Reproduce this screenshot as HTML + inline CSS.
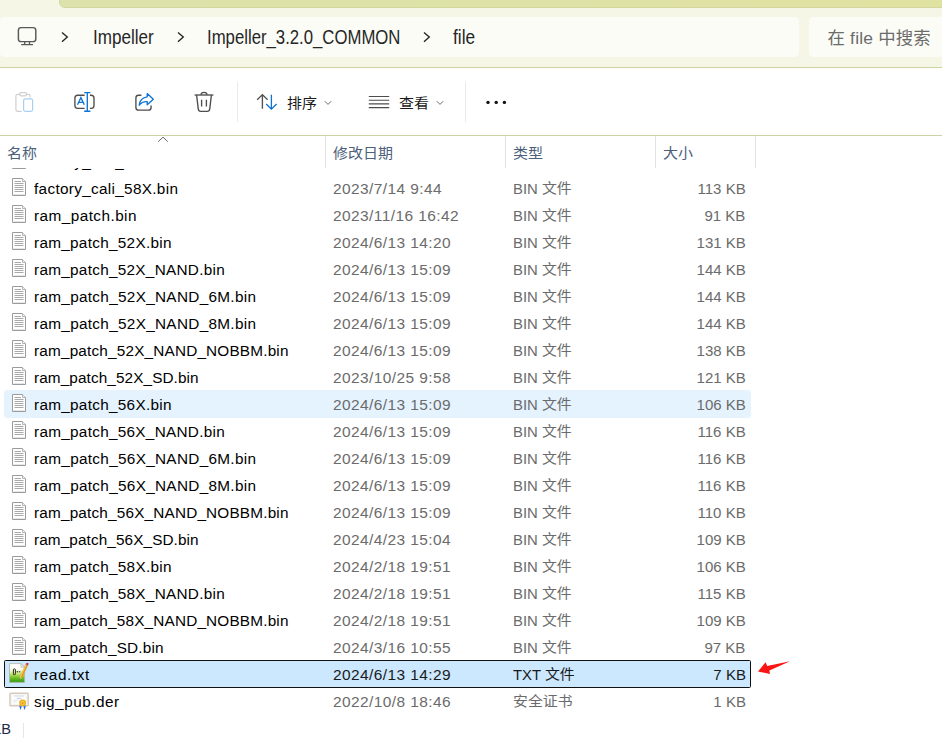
<!DOCTYPE html>
<html lang="zh-CN"><head><meta charset="utf-8"><title>file</title>
<style>
*{box-sizing:border-box}
html,body{margin:0;padding:0}
body{width:942px;height:738px;overflow:hidden;position:relative;background:#fff;
 font-family:"Liberation Sans","Noto Sans CJK SC",sans-serif;color:#000}
.abs{position:absolute}
#hdrbg{left:0;top:0;width:942px;height:67px;background:#f5f6e6}
#tab{left:59px;top:-8px;width:900px;height:16px;background:linear-gradient(90deg,#dce2ab,#e0e2a1);border-radius:6px;border:1px solid #d2d89d}
#addr{left:0px;top:17px;width:799px;height:40px;border-radius:4.5px;background:#fcfcf7}
#search{left:809px;top:17px;width:150px;height:40px;border-radius:4.5px;background:#fcfcf7}
#line1{left:0;top:67px;width:942px;height:1px;background:#ccd3a2}
#line2{left:0;top:135px;width:942px;height:1px;background:#cbd2a3}
.crumb{position:absolute;top:26px;height:22px;line-height:22px;font-size:17.2px;color:#1b1b1b;white-space:nowrap}
.cb{font-size:19.4px;transform-origin:0 50%;top:24.5px;color:#262626;height:24px;line-height:24px}
.sep{position:absolute;width:1px;background:#eaeaea}
.tbtxt{position:absolute;top:93px;height:20px;line-height:20px;font-size:15px;color:#1a1a1a;white-space:nowrap}
.hd{position:absolute;top:143px;height:20px;line-height:20px;font-size:15px;color:#4c607a;white-space:nowrap}
#list{left:0;top:168px;width:942px;height:552px;overflow:hidden}
.row{position:absolute;left:0;width:942px;height:27px}
.row span{position:absolute;top:3.5px;height:21px;line-height:21px;font-size:15.2px;white-space:nowrap}
.row .n{left:33.9px;color:#000;transform:scaleX(1.0086);transform-origin:0 50%;letter-spacing:0px}
.row .d{left:333.4px;color:#6b6b6b;transform:scaleX(1.0182);transform-origin:0 50%;letter-spacing:0.416px}
.row .t{left:512.7px;color:#6b6b6b;transform:scaleX(0.9797);transform-origin:0 50%}
.row .s{right:196.3px;color:#6b6b6b;text-align:right;transform:scaleX(0.9893);transform-origin:100% 50%}
.selrow .d,.selrow .t,.selrow .s{color:#1a1a1a !important}
.row span i{font-style:normal;display:inline-block;transform:scaleY(0.89);transform-origin:50% 52%}
.hd,.tbtxt{transform:scaleY(0.91);transform-origin:50% 52%}
.fi{position:absolute;display:block}
.hov{position:absolute;left:4px;width:747px;height:27.5px;border-radius:3px;background:#e5f3ff}
.sel{position:absolute;left:4px;width:747px;height:27.5px;border-radius:1.5px;background:#cce8ff;border:1px solid #111}
</style></head>
<body>
<div id="hdrbg" class="abs"></div><div id="tab" class="abs"></div><div id="addr" class="abs"></div><div id="search" class="abs"></div><div id="line1" class="abs"></div><div id="line2" class="abs"></div>
<svg class="abs" style="left:16px;top:25px" width="22" height="22" viewBox="0 0 22 22"><rect x="2.4" y="2.6" width="17.4" height="14" rx="2.7" fill="none" stroke="#585858" stroke-width="1.45"/><path d="M8.7 16.8V19.4M13.5 16.8V19.4M5.2 19.6H17" stroke="#585858" stroke-width="1.3" fill="none"/></svg>
<svg class="abs" style="left:60px;top:30.4px" width="10" height="14" viewBox="0 0 10 14"><path d="M2 2.4L7.3 7.1L2 11.8" fill="none" stroke="#242424" stroke-width="1.35"/></svg><svg class="abs" style="left:176px;top:30.4px" width="10" height="14" viewBox="0 0 10 14"><path d="M2 2.4L7.3 7.1L2 11.8" fill="none" stroke="#242424" stroke-width="1.35"/></svg><svg class="abs" style="left:422px;top:30.4px" width="10" height="14" viewBox="0 0 10 14"><path d="M2 2.4L7.3 7.1L2 11.8" fill="none" stroke="#242424" stroke-width="1.35"/></svg>
<div class="crumb cb" id="c1" style="left:93.2px;transform:scaleX(0.881)">Impeller</div><div class="crumb cb" id="c2" style="left:207.4px;transform:scaleX(0.863)">Impeller_3.2.0_COMMON</div><div class="crumb cb" id="c3" style="left:452.9px;transform:scaleX(0.89)">file</div>
<div class="crumb" id="c4" style="left:827.5px;top:27px;color:#6b6b6b;font-size:17.4px;letter-spacing:0.2px">在 file 中搜索</div>
<svg class="abs" style="left:13px;top:90px" width="22" height="24" viewBox="0 0 22 24"><path d="M7.2 4.4H4.6Q2.9 4.4 2.9 6.1V19.6Q2.9 21.3 4.6 21.3H8.6M13.4 4.4H15.6Q17.1 4.4 17.1 6V7.4" fill="none" stroke="#cfcfcf" stroke-width="1.2"/><rect x="6.6" y="2.6" width="7" height="3.2" rx="1.6" fill="none" stroke="#cfcfcf" stroke-width="1.2"/><rect x="10.6" y="8.8" width="9" height="12.6" rx="1.8" fill="#fff" stroke="#a8d0f2" stroke-width="1.2"/></svg>
<svg class="abs" style="left:72px;top:90px" width="24" height="24" viewBox="0 0 24 24"><path d="M12.6 5.2H5.8Q2.9 5.2 2.9 8.1V15.5Q2.9 18.4 5.8 18.4H12.6M17.9 5.2H19.1Q22 5.2 22 8.1V15.5Q22 18.4 19.1 18.4H17.9" fill="none" stroke="#4d4d4d" stroke-width="1.35"/><path d="M15.3 2.6V21.2M12.2 2.6H18.4M12.2 21.2H18.4" fill="none" stroke="#0c73d6" stroke-width="1.35"/><path d="M5.5 14.8L8.9 7.6L12.3 14.8M6.7 12.4H11.1" fill="none" stroke="#0c73d6" stroke-width="1.3"/></svg>
<svg class="abs" style="left:133px;top:90px" width="24" height="24" viewBox="0 0 24 24"><path d="M8.4 5.2H5.6Q2.9 5.2 2.9 7.9V17.4Q2.9 20.1 5.6 20.1H15.4Q18.1 20.1 18.1 17.4V15.6" fill="none" stroke="#4d4d4d" stroke-width="1.35"/><path d="M14.2 3.6L20.3 9.2L14.2 14.8V11.6Q9.2 11.2 6.2 15.2Q7.2 7.6 14.2 6.8Z" fill="none" stroke="#0c73d6" stroke-width="1.3" stroke-linejoin="round"/></svg>
<svg class="abs" style="left:193px;top:90px" width="22" height="24" viewBox="0 0 22 24"><path d="M1.6 5H20.4" stroke="#4d4d4d" stroke-width="1.35" fill="none"/><path d="M8 4.8Q8 2.4 11 2.4Q14 2.4 14 4.8" fill="none" stroke="#4d4d4d" stroke-width="1.3"/><path d="M3.6 5.2L5.3 19.2Q5.6 21.3 7.6 21.3H14.4Q16.4 21.3 16.7 19.2L18.4 5.2" fill="none" stroke="#4d4d4d" stroke-width="1.35"/><path d="M8.6 9.8V16.4M13.4 9.8V16.4" stroke="#4d4d4d" stroke-width="1.35" fill="none"/></svg>
<div class="sep" style="left:237px;top:82px;height:40px"></div><div class="sep" style="left:465px;top:82px;height:40px"></div>
<svg class="abs" style="left:255px;top:92px" width="24" height="20" viewBox="0 0 24 20"><path d="M7.4 2.6V16.8M2.2 7.8L7.4 2.6L12.6 7.8" fill="none" stroke="#505050" stroke-width="1.35"/><path d="M16.4 2.8V17.2M11.2 12L16.4 17.2L21.6 12" fill="none" stroke="#0c73d6" stroke-width="1.3"/></svg>
<div class="tbtxt" style="left:287px">排序</div>
<svg class="abs" style="left:324px;top:99.5px" width="8" height="6" viewBox="0 0 8 6"><path d="M0.8 1.2L4 4.4L7.2 1.2" fill="none" stroke="#6a6a6a" stroke-width="1"/></svg>
<svg class="abs" style="left:368px;top:95px" width="22" height="14" viewBox="0 0 22 14"><path d="M0.8 1.5H21.2M0.8 5.2H21.2M0.8 8.9H21.2M0.8 12.6H21.2" stroke="#4d4d4d" stroke-width="1.1" fill="none"/></svg>
<div class="tbtxt" style="left:399px">查看</div>
<svg class="abs" style="left:436px;top:99.5px" width="8" height="6" viewBox="0 0 8 6"><path d="M0.8 1.2L4 4.4L7.2 1.2" fill="none" stroke="#6a6a6a" stroke-width="1"/></svg>
<svg class="abs" style="left:484px;top:98px" width="24" height="8" viewBox="0 0 24 8"><circle cx="4" cy="4.4" r="1.7" fill="#111"/><circle cx="12.2" cy="4.4" r="1.7" fill="#111"/><circle cx="20.4" cy="4.4" r="1.7" fill="#111"/></svg>
<div class="hd" style="left:7px">名称</div><div class="hd" style="left:333px">修改日期</div><div class="hd" style="left:513px">类型</div><div class="hd" style="left:663px">大小</div>
<div class="sep" style="left:325px;top:136px;height:32px;background:#e2e2e2"></div><div class="sep" style="left:505px;top:136px;height:32px;background:#e2e2e2"></div><div class="sep" style="left:655px;top:136px;height:32px;background:#e2e2e2"></div><div class="sep" style="left:755px;top:136px;height:32px;background:#e2e2e2"></div>
<svg class="abs" style="left:157px;top:136px" width="12" height="7" viewBox="0 0 12 7"><path d="M1.2 5.6L6 1.2L10.8 5.6" fill="none" stroke="#6a6a6a" stroke-width="1"/></svg>
<div id="list" class="abs">
<div class="hov" style="top:222px"></div><div class="sel" style="top:492px"></div>
<div class="row" style="top:-21px"><svg class="fi" style="left:12px;top:4px" width="14" height="18" viewBox="0 0 14 18"><path d="M0.5 0.5H10.5L13.5 3.5V17.5H0.5Z" fill="#fff" stroke="#9b9b9b"/><path d="M10.5 0.5V3.5H13.5" fill="#f2f2f2" stroke="#b5b5b5"/><path d="M2.5 3.5H9M2.5 5.5H11.5M2.5 7.5H11.5M2.5 9.5H11.5M2.5 11.5H11.5M2.5 13.5H11.5" stroke="#a9a9a9" fill="none"/><path d="M1.5 16.5H12.5" stroke="#e6e6e6"/></svg><span class="n" style="letter-spacing:0.313px">factory_cali_56X.bin</span><span class="d">2023/7/14 9:44</span><span class="t" style="clip-path:inset(0 0 7px 0)">BIN <i>文件</i></span><span class="s">113 KB</span></div>
<div class="row" style="top:6px"><svg class="fi" style="left:12px;top:4px" width="14" height="18" viewBox="0 0 14 18"><path d="M0.5 0.5H10.5L13.5 3.5V17.5H0.5Z" fill="#fff" stroke="#9b9b9b"/><path d="M10.5 0.5V3.5H13.5" fill="#f2f2f2" stroke="#b5b5b5"/><path d="M2.5 3.5H9M2.5 5.5H11.5M2.5 7.5H11.5M2.5 9.5H11.5M2.5 11.5H11.5M2.5 13.5H11.5" stroke="#a9a9a9" fill="none"/><path d="M1.5 16.5H12.5" stroke="#e6e6e6"/></svg><span class="n" style="letter-spacing:0.313px">factory_cali_58X.bin</span><span class="d">2023/7/14 9:44</span><span class="t">BIN <i>文件</i></span><span class="s">113 KB</span></div>
<div class="row" style="top:33px"><svg class="fi" style="left:12px;top:4px" width="14" height="18" viewBox="0 0 14 18"><path d="M0.5 0.5H10.5L13.5 3.5V17.5H0.5Z" fill="#fff" stroke="#9b9b9b"/><path d="M10.5 0.5V3.5H13.5" fill="#f2f2f2" stroke="#b5b5b5"/><path d="M2.5 3.5H9M2.5 5.5H11.5M2.5 7.5H11.5M2.5 9.5H11.5M2.5 11.5H11.5M2.5 13.5H11.5" stroke="#a9a9a9" fill="none"/><path d="M1.5 16.5H12.5" stroke="#e6e6e6"/></svg><span class="n" style="letter-spacing:0.447px">ram_patch.bin</span><span class="d">2023/11/16 16:42</span><span class="t">BIN <i>文件</i></span><span class="s">91 KB</span></div>
<div class="row" style="top:60px"><svg class="fi" style="left:12px;top:4px" width="14" height="18" viewBox="0 0 14 18"><path d="M0.5 0.5H10.5L13.5 3.5V17.5H0.5Z" fill="#fff" stroke="#9b9b9b"/><path d="M10.5 0.5V3.5H13.5" fill="#f2f2f2" stroke="#b5b5b5"/><path d="M2.5 3.5H9M2.5 5.5H11.5M2.5 7.5H11.5M2.5 9.5H11.5M2.5 11.5H11.5M2.5 13.5H11.5" stroke="#a9a9a9" fill="none"/><path d="M1.5 16.5H12.5" stroke="#e6e6e6"/></svg><span class="n" style="letter-spacing:0.285px">ram_patch_52X.bin</span><span class="d">2024/6/13 14:20</span><span class="t">BIN <i>文件</i></span><span class="s">131 KB</span></div>
<div class="row" style="top:87px"><svg class="fi" style="left:12px;top:4px" width="14" height="18" viewBox="0 0 14 18"><path d="M0.5 0.5H10.5L13.5 3.5V17.5H0.5Z" fill="#fff" stroke="#9b9b9b"/><path d="M10.5 0.5V3.5H13.5" fill="#f2f2f2" stroke="#b5b5b5"/><path d="M2.5 3.5H9M2.5 5.5H11.5M2.5 7.5H11.5M2.5 9.5H11.5M2.5 11.5H11.5M2.5 13.5H11.5" stroke="#a9a9a9" fill="none"/><path d="M1.5 16.5H12.5" stroke="#e6e6e6"/></svg><span class="n" style="letter-spacing:0.283px">ram_patch_52X_NAND.bin</span><span class="d">2024/6/13 15:09</span><span class="t">BIN <i>文件</i></span><span class="s">144 KB</span></div>
<div class="row" style="top:114px"><svg class="fi" style="left:12px;top:4px" width="14" height="18" viewBox="0 0 14 18"><path d="M0.5 0.5H10.5L13.5 3.5V17.5H0.5Z" fill="#fff" stroke="#9b9b9b"/><path d="M10.5 0.5V3.5H13.5" fill="#f2f2f2" stroke="#b5b5b5"/><path d="M2.5 3.5H9M2.5 5.5H11.5M2.5 7.5H11.5M2.5 9.5H11.5M2.5 11.5H11.5M2.5 13.5H11.5" stroke="#a9a9a9" fill="none"/><path d="M1.5 16.5H12.5" stroke="#e6e6e6"/></svg><span class="n" style="letter-spacing:0.306px">ram_patch_52X_NAND_6M.bin</span><span class="d">2024/6/13 15:09</span><span class="t">BIN <i>文件</i></span><span class="s">144 KB</span></div>
<div class="row" style="top:141px"><svg class="fi" style="left:12px;top:4px" width="14" height="18" viewBox="0 0 14 18"><path d="M0.5 0.5H10.5L13.5 3.5V17.5H0.5Z" fill="#fff" stroke="#9b9b9b"/><path d="M10.5 0.5V3.5H13.5" fill="#f2f2f2" stroke="#b5b5b5"/><path d="M2.5 3.5H9M2.5 5.5H11.5M2.5 7.5H11.5M2.5 9.5H11.5M2.5 11.5H11.5M2.5 13.5H11.5" stroke="#a9a9a9" fill="none"/><path d="M1.5 16.5H12.5" stroke="#e6e6e6"/></svg><span class="n" style="letter-spacing:0.306px">ram_patch_52X_NAND_8M.bin</span><span class="d">2024/6/13 15:09</span><span class="t">BIN <i>文件</i></span><span class="s">144 KB</span></div>
<div class="row" style="top:168px"><svg class="fi" style="left:12px;top:4px" width="14" height="18" viewBox="0 0 14 18"><path d="M0.5 0.5H10.5L13.5 3.5V17.5H0.5Z" fill="#fff" stroke="#9b9b9b"/><path d="M10.5 0.5V3.5H13.5" fill="#f2f2f2" stroke="#b5b5b5"/><path d="M2.5 3.5H9M2.5 5.5H11.5M2.5 7.5H11.5M2.5 9.5H11.5M2.5 11.5H11.5M2.5 13.5H11.5" stroke="#a9a9a9" fill="none"/><path d="M1.5 16.5H12.5" stroke="#e6e6e6"/></svg><span class="n" style="letter-spacing:0.183px">ram_patch_52X_NAND_NOBBM.bin</span><span class="d">2024/6/13 15:09</span><span class="t">BIN <i>文件</i></span><span class="s">138 KB</span></div>
<div class="row" style="top:195px"><svg class="fi" style="left:12px;top:4px" width="14" height="18" viewBox="0 0 14 18"><path d="M0.5 0.5H10.5L13.5 3.5V17.5H0.5Z" fill="#fff" stroke="#9b9b9b"/><path d="M10.5 0.5V3.5H13.5" fill="#f2f2f2" stroke="#b5b5b5"/><path d="M2.5 3.5H9M2.5 5.5H11.5M2.5 7.5H11.5M2.5 9.5H11.5M2.5 11.5H11.5M2.5 13.5H11.5" stroke="#a9a9a9" fill="none"/><path d="M1.5 16.5H12.5" stroke="#e6e6e6"/></svg><span class="n" style="letter-spacing:0.104px">ram_patch_52X_SD.bin</span><span class="d">2023/10/25 9:58</span><span class="t">BIN <i>文件</i></span><span class="s">121 KB</span></div>
<div class="row" style="top:222px"><svg class="fi" style="left:12px;top:4px" width="14" height="18" viewBox="0 0 14 18"><path d="M0.5 0.5H10.5L13.5 3.5V17.5H0.5Z" fill="#fff" stroke="#9b9b9b"/><path d="M10.5 0.5V3.5H13.5" fill="#f2f2f2" stroke="#b5b5b5"/><path d="M2.5 3.5H9M2.5 5.5H11.5M2.5 7.5H11.5M2.5 9.5H11.5M2.5 11.5H11.5M2.5 13.5H11.5" stroke="#a9a9a9" fill="none"/><path d="M1.5 16.5H12.5" stroke="#e6e6e6"/></svg><span class="n" style="letter-spacing:0.285px">ram_patch_56X.bin</span><span class="d">2024/6/13 15:09</span><span class="t">BIN <i>文件</i></span><span class="s">106 KB</span></div>
<div class="row" style="top:249px"><svg class="fi" style="left:12px;top:4px" width="14" height="18" viewBox="0 0 14 18"><path d="M0.5 0.5H10.5L13.5 3.5V17.5H0.5Z" fill="#fff" stroke="#9b9b9b"/><path d="M10.5 0.5V3.5H13.5" fill="#f2f2f2" stroke="#b5b5b5"/><path d="M2.5 3.5H9M2.5 5.5H11.5M2.5 7.5H11.5M2.5 9.5H11.5M2.5 11.5H11.5M2.5 13.5H11.5" stroke="#a9a9a9" fill="none"/><path d="M1.5 16.5H12.5" stroke="#e6e6e6"/></svg><span class="n" style="letter-spacing:0.283px">ram_patch_56X_NAND.bin</span><span class="d">2024/6/13 15:09</span><span class="t">BIN <i>文件</i></span><span class="s">116 KB</span></div>
<div class="row" style="top:276px"><svg class="fi" style="left:12px;top:4px" width="14" height="18" viewBox="0 0 14 18"><path d="M0.5 0.5H10.5L13.5 3.5V17.5H0.5Z" fill="#fff" stroke="#9b9b9b"/><path d="M10.5 0.5V3.5H13.5" fill="#f2f2f2" stroke="#b5b5b5"/><path d="M2.5 3.5H9M2.5 5.5H11.5M2.5 7.5H11.5M2.5 9.5H11.5M2.5 11.5H11.5M2.5 13.5H11.5" stroke="#a9a9a9" fill="none"/><path d="M1.5 16.5H12.5" stroke="#e6e6e6"/></svg><span class="n" style="letter-spacing:0.306px">ram_patch_56X_NAND_6M.bin</span><span class="d">2024/6/13 15:09</span><span class="t">BIN <i>文件</i></span><span class="s">116 KB</span></div>
<div class="row" style="top:303px"><svg class="fi" style="left:12px;top:4px" width="14" height="18" viewBox="0 0 14 18"><path d="M0.5 0.5H10.5L13.5 3.5V17.5H0.5Z" fill="#fff" stroke="#9b9b9b"/><path d="M10.5 0.5V3.5H13.5" fill="#f2f2f2" stroke="#b5b5b5"/><path d="M2.5 3.5H9M2.5 5.5H11.5M2.5 7.5H11.5M2.5 9.5H11.5M2.5 11.5H11.5M2.5 13.5H11.5" stroke="#a9a9a9" fill="none"/><path d="M1.5 16.5H12.5" stroke="#e6e6e6"/></svg><span class="n" style="letter-spacing:0.306px">ram_patch_56X_NAND_8M.bin</span><span class="d">2024/6/13 15:09</span><span class="t">BIN <i>文件</i></span><span class="s">116 KB</span></div>
<div class="row" style="top:330px"><svg class="fi" style="left:12px;top:4px" width="14" height="18" viewBox="0 0 14 18"><path d="M0.5 0.5H10.5L13.5 3.5V17.5H0.5Z" fill="#fff" stroke="#9b9b9b"/><path d="M10.5 0.5V3.5H13.5" fill="#f2f2f2" stroke="#b5b5b5"/><path d="M2.5 3.5H9M2.5 5.5H11.5M2.5 7.5H11.5M2.5 9.5H11.5M2.5 11.5H11.5M2.5 13.5H11.5" stroke="#a9a9a9" fill="none"/><path d="M1.5 16.5H12.5" stroke="#e6e6e6"/></svg><span class="n" style="letter-spacing:0.183px">ram_patch_56X_NAND_NOBBM.bin</span><span class="d">2024/6/13 15:09</span><span class="t">BIN <i>文件</i></span><span class="s">110 KB</span></div>
<div class="row" style="top:357px"><svg class="fi" style="left:12px;top:4px" width="14" height="18" viewBox="0 0 14 18"><path d="M0.5 0.5H10.5L13.5 3.5V17.5H0.5Z" fill="#fff" stroke="#9b9b9b"/><path d="M10.5 0.5V3.5H13.5" fill="#f2f2f2" stroke="#b5b5b5"/><path d="M2.5 3.5H9M2.5 5.5H11.5M2.5 7.5H11.5M2.5 9.5H11.5M2.5 11.5H11.5M2.5 13.5H11.5" stroke="#a9a9a9" fill="none"/><path d="M1.5 16.5H12.5" stroke="#e6e6e6"/></svg><span class="n" style="letter-spacing:0.104px">ram_patch_56X_SD.bin</span><span class="d">2024/4/23 15:04</span><span class="t">BIN <i>文件</i></span><span class="s">109 KB</span></div>
<div class="row" style="top:384px"><svg class="fi" style="left:12px;top:4px" width="14" height="18" viewBox="0 0 14 18"><path d="M0.5 0.5H10.5L13.5 3.5V17.5H0.5Z" fill="#fff" stroke="#9b9b9b"/><path d="M10.5 0.5V3.5H13.5" fill="#f2f2f2" stroke="#b5b5b5"/><path d="M2.5 3.5H9M2.5 5.5H11.5M2.5 7.5H11.5M2.5 9.5H11.5M2.5 11.5H11.5M2.5 13.5H11.5" stroke="#a9a9a9" fill="none"/><path d="M1.5 16.5H12.5" stroke="#e6e6e6"/></svg><span class="n" style="letter-spacing:0.285px">ram_patch_58X.bin</span><span class="d">2024/2/18 19:51</span><span class="t">BIN <i>文件</i></span><span class="s">106 KB</span></div>
<div class="row" style="top:411px"><svg class="fi" style="left:12px;top:4px" width="14" height="18" viewBox="0 0 14 18"><path d="M0.5 0.5H10.5L13.5 3.5V17.5H0.5Z" fill="#fff" stroke="#9b9b9b"/><path d="M10.5 0.5V3.5H13.5" fill="#f2f2f2" stroke="#b5b5b5"/><path d="M2.5 3.5H9M2.5 5.5H11.5M2.5 7.5H11.5M2.5 9.5H11.5M2.5 11.5H11.5M2.5 13.5H11.5" stroke="#a9a9a9" fill="none"/><path d="M1.5 16.5H12.5" stroke="#e6e6e6"/></svg><span class="n" style="letter-spacing:0.283px">ram_patch_58X_NAND.bin</span><span class="d">2024/2/18 19:51</span><span class="t">BIN <i>文件</i></span><span class="s">115 KB</span></div>
<div class="row" style="top:438px"><svg class="fi" style="left:12px;top:4px" width="14" height="18" viewBox="0 0 14 18"><path d="M0.5 0.5H10.5L13.5 3.5V17.5H0.5Z" fill="#fff" stroke="#9b9b9b"/><path d="M10.5 0.5V3.5H13.5" fill="#f2f2f2" stroke="#b5b5b5"/><path d="M2.5 3.5H9M2.5 5.5H11.5M2.5 7.5H11.5M2.5 9.5H11.5M2.5 11.5H11.5M2.5 13.5H11.5" stroke="#a9a9a9" fill="none"/><path d="M1.5 16.5H12.5" stroke="#e6e6e6"/></svg><span class="n" style="letter-spacing:0.183px">ram_patch_58X_NAND_NOBBM.bin</span><span class="d">2024/2/18 19:51</span><span class="t">BIN <i>文件</i></span><span class="s">109 KB</span></div>
<div class="row" style="top:465px"><svg class="fi" style="left:12px;top:4px" width="14" height="18" viewBox="0 0 14 18"><path d="M0.5 0.5H10.5L13.5 3.5V17.5H0.5Z" fill="#fff" stroke="#9b9b9b"/><path d="M10.5 0.5V3.5H13.5" fill="#f2f2f2" stroke="#b5b5b5"/><path d="M2.5 3.5H9M2.5 5.5H11.5M2.5 7.5H11.5M2.5 9.5H11.5M2.5 11.5H11.5M2.5 13.5H11.5" stroke="#a9a9a9" fill="none"/><path d="M1.5 16.5H12.5" stroke="#e6e6e6"/></svg><span class="n" style="letter-spacing:0.178px">ram_patch_SD.bin</span><span class="d">2024/3/16 10:55</span><span class="t">BIN <i>文件</i></span><span class="s">97 KB</span></div>
<div class="row selrow" style="top:492px"><svg class="fi" style="left:9px;top:3px" width="21" height="21" viewBox="0 0 21 21"><defs><linearGradient id="gg" x1="0" y1="0" x2="0" y2="1"><stop offset="0" stop-color="#ffffff"/><stop offset="0.3" stop-color="#fbfdf3"/><stop offset="0.5" stop-color="#d4ec8e"/><stop offset="0.72" stop-color="#7cc62a"/><stop offset="1" stop-color="#2c9a14"/></linearGradient></defs><path d="M0.5 0.6H12L15.6 4.2V19.4H0.5Z" fill="url(#gg)" stroke="#b4b8ac" stroke-width="0.9"/><path d="M12 0.6V4.2H15.6Z" fill="#f0f0f0" stroke="#b9b9b9" stroke-width="0.8"/><rect x="4.4" y="5.9" width="2" height="5.8" rx="0.8" fill="none" stroke="#1d1d1d" stroke-width="0.95"/><circle cx="8.4" cy="8.8" r="0.8" fill="#2a2a2a"/><circle cx="10.7" cy="8.8" r="0.75" fill="#444"/><path d="M17.9 1.6L11.9 14.4" stroke="#e59a17" stroke-width="2.5"/><path d="M17.3 1.4L11.3 14.1" stroke="#f9d56e" stroke-width="0.8"/><path d="M10.8 13.9L10.5 16.4L13 14.9Z" fill="#e2c49a"/><path d="M10.5 16.4L10.65 15.3L11.4 15.8Z" fill="#3a2a1a"/><path d="M18.7 0L17.8 1.9" stroke="#c9454c" stroke-width="2.5"/></svg><span class="n" style="letter-spacing:0.594px">read.txt</span><span class="d">2024/6/13 14:29</span><span class="t">TXT <i>文件</i></span><span class="s">7 KB</span></div>
<div class="row" style="top:519px"><svg class="fi" style="left:9px;top:5px" width="21" height="19" viewBox="0 0 21 19"><rect x="0.95" y="1.25" width="18.2" height="12.6" rx="0.8" fill="#fdfdfd" stroke="#d5cbbb" stroke-width="1.5"/><rect x="2.6" y="2.9" width="14.9" height="9.3" fill="none" stroke="#efebe4" stroke-width="0.5"/><path d="M5 4H15" stroke="#b7c5ea" stroke-width="0.7"/><path d="M7.8 6.4H12.2" stroke="#a9b9e6" stroke-width="0.8"/><path d="M4 8.4H9.6M4 10.2H7.4" stroke="#d6ddf0" stroke-width="0.7"/><path d="M10.3 13.6L11.3 18.2L12.9 14.6Z" fill="#2b6cf0"/><path d="M14.3 14.6L15.7 18.2L16.9 13.6Z" fill="#2b6cf0"/><circle cx="13.6" cy="10.9" r="3.4" fill="#eeac17"/><circle cx="13.6" cy="10.9" r="2.1" fill="#f6cc52"/><circle cx="13.6" cy="10.9" r="1" fill="#dd9b0e"/></svg><span class="n" style="letter-spacing:0.505px">sig_pub.der</span><span class="d">2022/10/8 18:46</span><span class="t"><i>安全证书</i></span><span class="s">1 KB</span></div>
</div>
<svg class="abs" style="left:755px;top:658px" width="40" height="20" viewBox="755 658 40 20"><path d="M758 671.4L765.6 662.2L767.2 666L790 661.2L769.4 670.4L770 673.9Z" fill="#fb1414"/></svg>
<div class="abs" style="left:-8.6px;top:719px;height:20px;line-height:20px;font-size:14.6px;color:#1c2b46;white-space:nowrap">KB</div><div class="sep" style="left:23px;top:723px;height:15px;background:#e6e6e6"></div>
</body></html>
